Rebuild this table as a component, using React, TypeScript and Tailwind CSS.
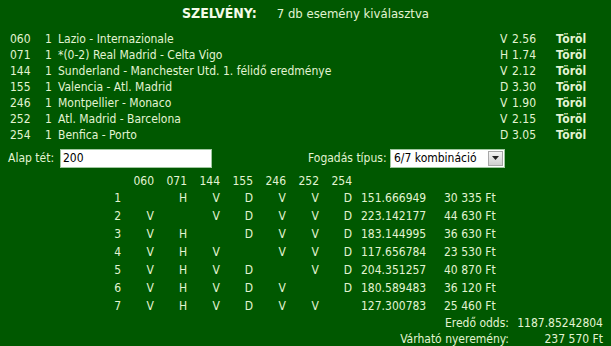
import React from 'react';

const events = [
  { code: '060', tip: '1', name: 'Lazio - Internazionale', pick: 'V', odds: '2.56' },
  { code: '071', tip: '1', name: '*(0-2) Real Madrid - Celta Vigo', pick: 'H', odds: '1.74' },
  { code: '144', tip: '1', name: 'Sunderland - Manchester Utd. 1. félidő eredménye', pick: 'V', odds: '2.12' },
  { code: '155', tip: '1', name: 'Valencia - Atl. Madrid', pick: 'D', odds: '3.30' },
  { code: '246', tip: '1', name: 'Montpellier - Monaco', pick: 'V', odds: '1.90' },
  { code: '252', tip: '1', name: 'Atl. Madrid - Barcelona', pick: 'V', odds: '2.15' },
  { code: '254', tip: '1', name: 'Benfica - Porto', pick: 'D', odds: '3.05' },
];

const picks = ['V', 'H', 'V', 'D', 'V', 'V', 'D'];

const combos = [
  { odds: '151.666949', win: '30 335 Ft' },
  { odds: '223.142177', win: '44 630 Ft' },
  { odds: '183.144995', win: '36 630 Ft' },
  { odds: '117.656784', win: '23 530 Ft' },
  { odds: '204.351257', win: '40 870 Ft' },
  { odds: '180.589483', win: '36 120 Ft' },
  { odds: '127.300783', win: '25 460 Ft' },
];

export default function App() {
  return (
    <div className="w-[611px] h-[346px] bg-[#005800] text-[#e2f4d2] text-[12px] leading-none overflow-hidden font-['DejaVu_Sans_Condensed','DejaVu_Sans',sans-serif]">
      {/* fejléc */}
      <div className="flex justify-center gap-[20px] pt-[6px] h-[31px] items-start">
        <span className="font-bold text-[14px] leading-[15px] text-[#f4fbe8]">SZELVÉNY:</span>
        <span className="text-[13px] leading-[15px]">7 db esemény kiválasztva</span>
      </div>

      {/* események */}
      <div className="flex flex-col">
        {events.map((e) => (
          <div key={e.code} className="flex items-center h-[16px] pl-[10px]">
            <span className="w-[35px]">{e.code}</span>
            <span className="w-[13px]">{e.tip}</span>
            <span className="flex-1">{e.name}</span>
            <span className="w-[12px]">{e.pick}</span>
            <span className="w-[44px]">{e.odds}</span>
            <span className="w-[55px] font-bold">Töröl</span>
          </div>
        ))}
      </div>

      {/* beállítások */}
      <div className="flex items-center h-[22px] mt-[4px]">
        <span className="pl-[8px] w-[60px]">Alap tét:</span>
        <div className="w-[152px] h-[19px] bg-white border border-[#9fc79f] text-black flex items-center pl-[2px]">200</div>
        <span className="ml-[96px] w-[82px]">Fogadás típus:</span>
        <div className="w-[115px] h-[19px] bg-white border border-[#9fc79f] text-black flex items-center">
          <span className="flex-1 pl-[3px]">6/7 kombináció</span>
          <div className="w-[15px] h-[15px] mr-[1px] border border-[#a8a8a8] bg-gradient-to-b from-[#f4f4f4] to-[#d0d0d0] flex items-center justify-center">
            <svg width="7" height="4" viewBox="0 0 7 4"><path d="M0 0h7L3.5 4z" fill="#222" /></svg>
          </div>
        </div>
      </div>

      {/* kombinációk */}
      <div className="grid grid-cols-[121px_repeat(7,33px)_92px_150px] mt-[3px]">
        <div className="h-[17px]" />
        {events.map((e) => (
          <div key={e.code} className="h-[17px] flex items-center justify-end">{e.code}</div>
        ))}
        <div />
        <div />
        {combos.map((c, i) => (
          <React.Fragment key={i}>
            <div className="h-[18px] flex items-center justify-end">{i + 1}</div>
            {picks.map((p, j) => (
              <div key={j} className="h-[18px] flex items-center justify-end">{j === i ? '' : p}</div>
            ))}
            <div className="h-[18px] flex items-center pl-[9px]">{c.odds}</div>
            <div className="h-[18px] flex items-center">{c.win}</div>
          </React.Fragment>
        ))}
      </div>

      {/* összesítés */}
      <div className="grid grid-cols-[509px_94px]">
        <div className="h-[16px] flex items-center justify-end">Eredő odds:</div>
        <div className="h-[16px] flex items-center justify-end">1187.85242804</div>
        <div className="h-[16px] flex items-center justify-end">Várható nyeremény:</div>
        <div className="h-[16px] flex items-center justify-end">237 570 Ft</div>
      </div>
    </div>
  );
}
